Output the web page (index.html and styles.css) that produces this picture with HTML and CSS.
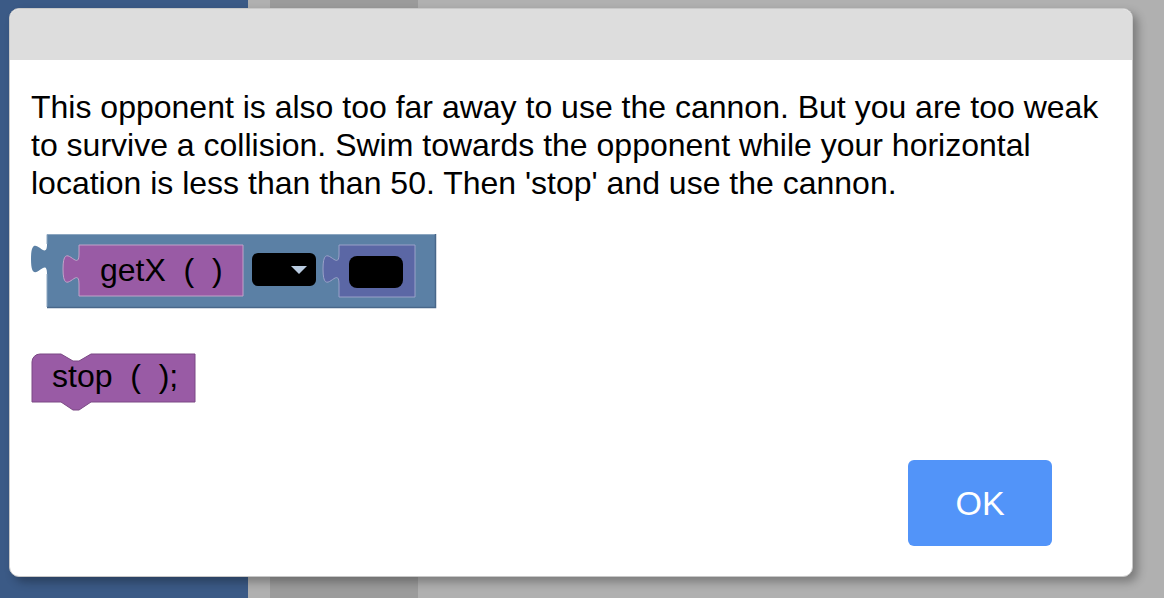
FILE: index.html
```html
<!DOCTYPE html>
<html lang="en">
<head>
  <meta charset="UTF-8" />
  <meta name="viewport" content="width=device-width, initial-scale=1.0"/>
  <title>Level hint</title>
  <link rel="stylesheet" href="styles.css">
</head>
<body>
  <div class="workspace">
    <div class="col col-blue"></div>
    <div class="col col-light"></div>
    <div class="col col-mid"></div>
    <div class="col col-rest"></div>
  </div>

  <div class="dialog">
    <div class="dialog-header"></div>
    <div class="dialog-body">
      <p class="hint">This opponent is also too far away to use the cannon. But you are too weak to survive a collision. Swim towards the opponent while your horizontal location is less than than 50. Then 'stop' and use the cannon.</p>

      <!-- compare block: getX() < 50 -->
      <svg class="block block-compare" width="410" height="80" viewBox="0 0 410 80">
        <path class="outer" d="M17,2 H406 V75 H17 V42 c0,-20 -16,16 -16,-15 s16,5 16,-15 V2 z"/>
        <path class="outer-hi" d="M17,75 V42 M17,12 V2.5 H405.5"/>
        <path class="outer-lo" d="M405.5,2 V75.5 H17"/>

        <path class="purple" d="M49,13 H213 V64 H49 V52 c0,-20 -16,16 -16,-15 s16,5 16,-15 V13 z"/>
        <text class="label" x="70" y="49">getX&#160;&#160;(&#160;&#160;)</text>

        <rect class="field" x="222" y="21" width="64" height="33" rx="6"/>
        <polygon class="arrow" points="261,34 277,34 269,42"/>

        <path class="indigo" d="M309,13 H385 V65 H309 V52 c0,-20 -16,16 -16,-15 s16,5 16,-15 V13 z"/>
        <rect class="field" x="319" y="24" width="54" height="32" rx="8"/>
      </svg>

      <!-- statement block: stop(); -->
      <svg class="block block-stop" width="200" height="64" viewBox="0 0 200 64">
        <path class="purple-stmt" d="M2,12 A8,8 0 0 1 10,4 H31 l12,7 h6 l12,-7 H165 V52 H61 l-12,8 h-6 l-12,-8 H2 Z"/>
        <text class="label" x="22" y="37">stop&#160;&#160;(&#160;&#160;);</text>
      </svg>

      <div class="dialog-footer">
        <button class="ok-btn">OK</button>
      </div>
    </div>
  </div>
</body>
</html>
```

FILE: styles.css
```css
body {
  margin: 0;
  padding: 0;
  font-family: 'Liberation Sans', Arial, sans-serif;
  overflow: hidden;
}

.workspace {
  display: flex;
  height: 598px;
}

.col {
  height: 100%;
}

.col-blue {
  width: 248px;
  background: #3b5a86;
}

.col-light {
  width: 22px;
  background: #b0b0b0;
}

.col-mid {
  width: 148px;
  background: #9b9b9b;
}

.col-rest {
  flex: 1;
  background: #b0b0b0;
}

.dialog {
  position: absolute;
  left: 9px;
  top: 8px;
  width: 1124px;
  height: 569px;
  box-sizing: border-box;
  background: white;
  border: 1px solid #c8c8c8;
  border-radius: 10px;
  box-shadow: 5px 5px 10px rgba(0,0,0,0.3);
  overflow: hidden;
}

.dialog-header {
  height: 51px;
  background: #dddddd;
}

.dialog-body {
  padding: 28px 21px 0 21px;
}

.hint {
  margin: 0;
  font-size: 32px;
  line-height: 38px;
  color: #000;
}

.block {
  display: block;
}

.block-compare {
  margin: 30px 0 0 -1px;
}

.block-stop {
  margin: 38px 0 0 -1px;
}

.block .label {
  font-family: 'Liberation Sans', Arial, sans-serif;
  font-size: 32px;
  fill: #000;
}

.outer {
  fill: #5b80a5;
}

.outer-hi {
  fill: none;
  stroke: #8ca6c0;
  stroke-width: 1;
}

.outer-lo {
  fill: none;
  stroke: #48678a;
  stroke-width: 1.5;
}

.purple {
  fill: #995ba5;
  stroke: #c2a3c9;
  stroke-width: 1;
}

.indigo {
  fill: #5b67a5;
  stroke: #9aa1c8;
  stroke-width: 1;
}

.purple-stmt {
  fill: #995ba5;
  stroke: #7a4884;
  stroke-width: 1;
}

.field {
  fill: #000;
}

.arrow {
  fill: #b9cbe0;
}

.dialog-footer {
  display: flex;
  justify-content: flex-end;
  margin-top: 46px;
  padding-right: 59px;
}

.ok-btn {
  width: 144px;
  height: 86px;
  background-color: #5294f9;
  color: white;
  font-family: 'Liberation Sans', Arial, sans-serif;
  font-size: 34px;
  border: none;
  border-radius: 6px;
  cursor: pointer;
}
```
